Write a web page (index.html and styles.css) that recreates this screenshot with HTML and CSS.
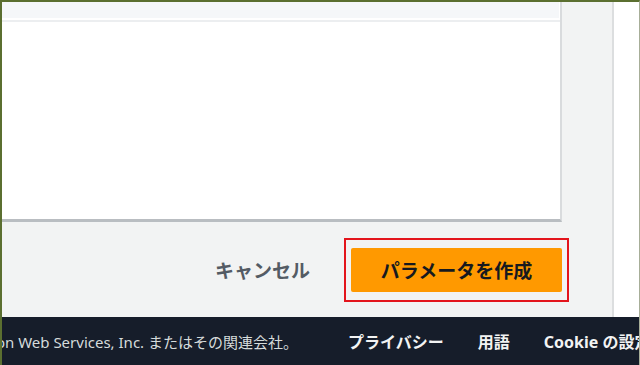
FILE: index.html
```html
<!DOCTYPE html>
<html lang="ja">
<head>
    <meta charset="utf-8">
    <meta name="viewport" content="width=device-width, initial-scale=1.0">
    <title>パラメータの作成</title>
    <link rel="stylesheet" href="styles.css">
</head>

<body>

    <div class="wrap">
        <div class="console">
            <section class="card">
                <div class="card-head"></div>
                <div class="card-body"></div>
            </section>

            <div class="actions">
                <button class="cancel">キャンセル</button>
                <span class="mark">
                    <button class="primary">パラメータを作成</button>
                </span>
            </div>
        </div>
        <div class="edge"></div>
    </div>

    <footer>
        <div class="copy">
            <span>© 2008 - 2021, Amazon Web Services, Inc. またはその関連会社。</span>
        </div>
        <nav class="links">
            <a>プライバシー</a>
            <a>用語</a>
            <a>Cookie の設定</a>
        </nav>
    </footer>

</body>
</html>
```

FILE: styles.css
```css
* {
    box-sizing: border-box;
    font-family: "Noto Sans", "Noto Sans CJK JP", sans-serif;
}

html,
body {
    height: 100%;
}

body {
    margin: 0;
    display: flex;
    flex-direction: column;
    overflow: hidden;
    border-top: 2px solid #5b6f30;
    border-left: 2px solid #5b6f30;
    border-right: 1px solid #a7ae98;
    background-color: #ffffff;
}

.wrap {
    flex: 1;
    display: flex;
}

.console {
    flex: 1;
    display: flex;
    flex-direction: column;
    background-color: #f2f3f3;
    border-right: 2px solid #dcdedf;
}

.edge {
    width: 25px;
    background-color: #ffffff;
}

/* kortet øverst */
.card {
    width: 560px;
    height: 220px;
    background-color: #ffffff;
    border-right: 2px solid #d9dbdd;
    border-bottom: 3px solid #b9bdc1;
}

.card-head {
    height: 18px;
    margin-right: 1px;
    background-color: #f5f7f9;
    border-bottom: 2px solid #ffffff;
}

.card-body {
    border-top: 2px solid #eceef0;
}

.actions {
    flex: 1;
    display: flex;
    justify-content: flex-end;
    align-items: center;
    padding-right: 43px;
}

.cancel {
    margin-right: 34px;
    padding: 0;
    border: none;
    background: none;
    font-size: 19px;
    font-weight: 700;
    color: #545b64;
}

.mark {
    display: flex;
    padding: 8px 5px;
    border: 2px solid #e3141b;
}

.primary {
    width: 211px;
    height: 44px;
    border: none;
    border-radius: 2px;
    background-color: #ff9900;
    font-size: 19px;
    font-weight: 700;
    color: #16191f;
}

footer {
    height: 48px;
    display: flex;
    align-items: center;
    white-space: nowrap;
    background-color: #161d2a;
}

.copy {
    flex: none;
    width: 296px;
    display: flex;
    justify-content: flex-end;
    overflow: hidden;
    font-size: 15px;
    color: #d5dbdb;
}

.links {
    display: flex;
    gap: 34px;
    margin-left: 50px;
}

.links a {
    font-size: 16px;
    font-weight: 700;
    color: #f2f3f3;
}
```
